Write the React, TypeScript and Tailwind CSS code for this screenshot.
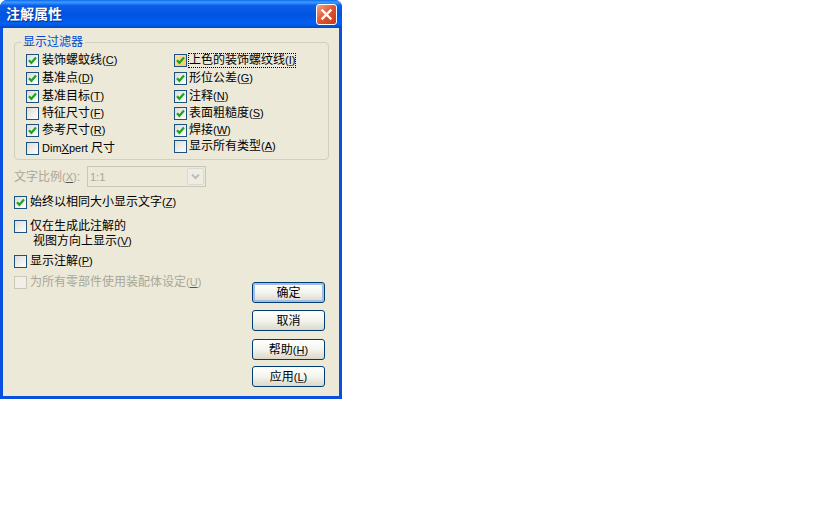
import React from 'react';

const FONT = 'font-["Liberation_Sans","Noto_Sans_CJK_SC",sans-serif]';

interface CheckProps {
  label: React.ReactNode;
  checked?: boolean;
  disabled?: boolean;
  focused?: boolean;
  warm?: boolean;
  gap?: string;
  className?: string;
}

// mnemonic suffix, latin part is a bit narrower than the CJK text
const Key: React.FC<{ k: string }> = ({ k }) => (
  <span className="text-[11px]">
    (<u className="decoration-[#555]">{k}</u>)
  </span>
);

const Check: React.FC<CheckProps> = ({ label, checked, disabled, focused, warm, gap = 'gap-[3px]', className = '' }) => (
  <div className={`flex items-center ${gap} ${className}`}>
    <span
      className={`relative block w-[13px] h-[13px] shrink-0 border ${
        disabled
          ? 'border-[#cac8bb] bg-[#f2f0e6]'
          : warm
            ? 'border-[#1c5180] bg-gradient-to-br from-[#fce3a8] to-[#f6c765]'
            : 'border-[#1c5180] bg-gradient-to-br from-[#dcdcd7] to-[#ffffff]'
      }`}
    >
      {checked && (
        <svg width="11" height="11" viewBox="0 0 11 11" className="absolute left-0 top-0">
          <path d="M2 5.2 L4.4 7.8 L9 2.6" fill="none" stroke="#21a121" strokeWidth="2.2" />
        </svg>
      )}
    </span>
    <span
      className={`text-[12px] leading-[13px] whitespace-nowrap ${disabled ? 'text-[#a9a79a]' : 'text-black'} ${
        focused ? 'outline outline-1 outline-dotted outline-black' : ''
      }`}
    >
      {label}
    </span>
  </div>
);

const Btn: React.FC<{ primary?: boolean; className?: string; children: React.ReactNode }> = ({ primary, className = '', children }) => (
  <button
    className={`w-[73px] h-[21px] rounded-[3px] border border-[#003c74] text-[12px] leading-[14px] text-black bg-gradient-to-b from-[#ffffff] via-[#f4f4ee] to-[#dcd8c8] ${
      primary ? 'shadow-[inset_0_0_0_2px_#a4bde6]' : ''
    } ${className}`}
  >
    {children}
  </button>
);

const App: React.FC = () => {
  return (
    <div className={`w-[840px] h-[525px] bg-white ${FONT}`}>
      {/* Dialog window */}
      <div className="w-[342px] h-[399px] flex flex-col rounded-t-[7px] overflow-hidden bg-[#0a50e0]">
        {/* Title bar */}
        <div className="h-[28px] shrink-0 flex items-center justify-between pl-[6px] pr-[5px] bg-[linear-gradient(180deg,#0a6cf0_0%,#3f9bff_8%,#0a5ee8_20%,#0054e3_55%,#0060f0_85%,#0048c8_100%)]">
          <span className="text-[14px] leading-[16px] font-bold text-white [text-shadow:1px_1px_0_#0a2f8f]">注解属性</span>
          <span className="w-[21px] h-[21px] rounded-[3px] border border-white bg-gradient-to-br from-[#f0a08a] via-[#e0532f] to-[#c13a18] flex items-center justify-center">
            <svg width="13" height="13" viewBox="0 0 13 13">
              <path d="M2.5 2.5 L10.5 10.5 M10.5 2.5 L2.5 10.5" stroke="#ffffff" strokeWidth="2.4" strokeLinecap="square" />
            </svg>
          </span>
        </div>

        {/* Client area */}
        <div className="flex-1 mx-[3px] mb-[3px] bg-[#ece9d8] flex flex-col pt-[14px] pl-[11px] pr-[12px]">
          {/* Filter group */}
          <div className="relative w-[315px] h-[118px] shrink-0 rounded-[4px] border border-[#d0d0bf] flex pt-[8px] pl-[11px]">
            <span className="absolute left-[6px] top-[-8px] px-[2px] bg-[#ece9d8] text-[12px] leading-[14px] text-[#0046d5]">显示过滤器</span>
            <div className="w-[148px] flex flex-col">
              <Check className="h-[18px]" checked label={<>装饰螺蚊线<Key k="C" /></>} />
              <Check className="h-[18px]" checked label={<>基准点<Key k="D" /></>} />
              <Check className="h-[18px]" checked label={<>基准目标<Key k="T" /></>} />
              <Check className="h-[17px]" label={<>特征尺寸<Key k="F" /></>} />
              <Check className="h-[17px]" checked label={<>参考尺寸<Key k="R" /></>} />
              <Check
                className="h-[18px]"
                label={
                  <span className="text-[11px]">
                    Dim<u>X</u>pert <span className="text-[12px]">尺寸</span>
                  </span>
                }
              />
            </div>
            <div className="flex flex-col">
              <Check className="h-[18px]" gap="gap-[2px]" checked warm focused label={<>上色的装饰螺纹线<Key k="I" /></>} />
              <Check className="h-[18px]" gap="gap-[2px]" checked label={<>形位公差<Key k="G" /></>} />
              <Check className="h-[18px]" gap="gap-[2px]" checked label={<>注释<Key k="N" /></>} />
              <Check className="h-[17px]" gap="gap-[2px]" checked label={<>表面粗糙度<Key k="S" /></>} />
              <Check className="h-[17px]" gap="gap-[2px]" checked label={<>焊接<Key k="W" /></>} />
              <Check className="h-[14px]" gap="gap-[2px]" label={<>显示所有类型<Key k="A" /></>} />
            </div>
          </div>

          {/* Lower section */}
          <div className="flex-1 flex justify-between pt-[6px]">
            <div className="flex flex-col">
              <div className="flex items-center h-[21px]">
                <span className="w-[73px] text-[12px] leading-[14px] text-[#a9a79a] whitespace-nowrap">文字比例<Key k="X" />:</span>
                <div className="w-[119px] h-[21px] border border-[#c9c7ba] bg-[#ece9d8] flex items-center justify-between pl-[2px] pr-[1px]">
                  <span className="text-[11px] leading-[14px] text-[#a9a79a]">1:1</span>
                  <span className="w-[17px] h-[17px] bg-[#eeede5] border border-[#dcdad0] rounded-[2px] flex items-center justify-center">
                    <svg width="9" height="7" viewBox="0 0 9 7">
                      <path d="M1 1.5 L4.5 5 L8 1.5" fill="none" stroke="#c0bfb4" strokeWidth="2" />
                    </svg>
                  </span>
                </div>
              </div>
              <Check className="mt-[8px] h-[14px]" checked label={<>始终以相同大小显示文字<Key k="Z" /></>} />
              <Check className="mt-[10px] h-[14px]" label="仅在生成此注解的" />
              <span className="mt-[1px] ml-[19px] text-[12px] leading-[14px] text-black whitespace-nowrap">视图方向上显示<Key k="V" /></span>
              <Check className="mt-[6px] h-[14px]" label={<>显示注解<Key k="P" /></>} />
              <Check className="mt-[7px] h-[14px]" disabled label={<>为所有零部件使用装配体设定<Key k="U" /></>} />
            </div>
            <div className="flex flex-col justify-end pb-[9px] pr-[2px]">
              <Btn primary>确定</Btn>
              <Btn className="mt-[7px]">取消</Btn>
              <Btn className="mt-[8px]">帮助<Key k="H" /></Btn>
              <Btn className="mt-[6px]">应用<Key k="L" /></Btn>
            </div>
          </div>
        </div>
      </div>
    </div>
  );
};

export default App;
